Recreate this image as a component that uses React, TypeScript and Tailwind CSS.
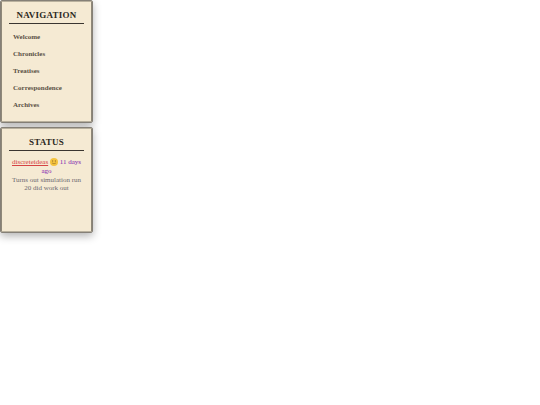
import React from 'react';

interface PanelProps {
  title: string;
  className?: string;
  children: React.ReactNode;
}

const links = ['Welcome', 'Chronicles', 'Treatises', 'Correspondence', 'Archives'];

const Panel: React.FC<PanelProps> = ({ title, className, children }) => (
  <section className="rounded-xs border border-[#858077] shadow-[0_3px_8px_rgba(0,0,0,0.3)]">
    <div className={`border border-x-[#8f8879] border-y-[#b9b19e] bg-[#f5ead3] px-[7px] pt-2 ${className ?? ''}`}>
      <h2 className="border-b border-[#3a3530] pb-[3px] text-center text-[9px] leading-[10px] font-bold tracking-wide text-[#2c2822]">
        {title}
      </h2>
      {children}
    </div>
  </section>
);

const Smiley = () => (
  <svg viewBox="0 0 16 16" className="inline-block size-2 align-middle" role="img" aria-label="smiling face">
    <circle cx="8" cy="8" r="8" fill="#f4c33d" />
    <ellipse cx="5.4" cy="6.2" rx="1" ry="1.5" fill="#8a6322" />
    <ellipse cx="10.6" cy="6.2" rx="1" ry="1.5" fill="#8a6322" />
    <path d="M4.5 10.4 Q8 13.2 11.5 10.4" fill="none" stroke="#8a6322" strokeWidth="1.1" strokeLinecap="round" />
  </svg>
);

const App: React.FC = () => {
  return (
    <div className="flex w-[93px] flex-col gap-1 pb-4 font-['Liberation_Serif',serif]">
      <Panel title="NAVIGATION" className="pb-[7px]">
        <nav className="mt-[5px] px-1">
          <ul>
            {links.map((link) => (
              <li key={link}>
                <a href="#" className="block py-1 text-[7px] leading-[9px] font-bold text-[#5a5145]">
                  {link}
                </a>
              </li>
            ))}
          </ul>
        </nav>
      </Panel>

      <Panel title="STATUS" className="min-h-[104px]">
        <div className="mt-[7px] text-center text-[7px] text-[#6b6870]">
          <p className="leading-[9px] text-[#7d22b0]">
            <a href="#" className="text-[#d64343] underline">discreteideas</a> <Smiley /> 11 days ago
          </p>
          <p className="leading-[8px]">Turns out simulation run 20 did work out</p>
        </div>
      </Panel>
    </div>
  );
};

export default App;
